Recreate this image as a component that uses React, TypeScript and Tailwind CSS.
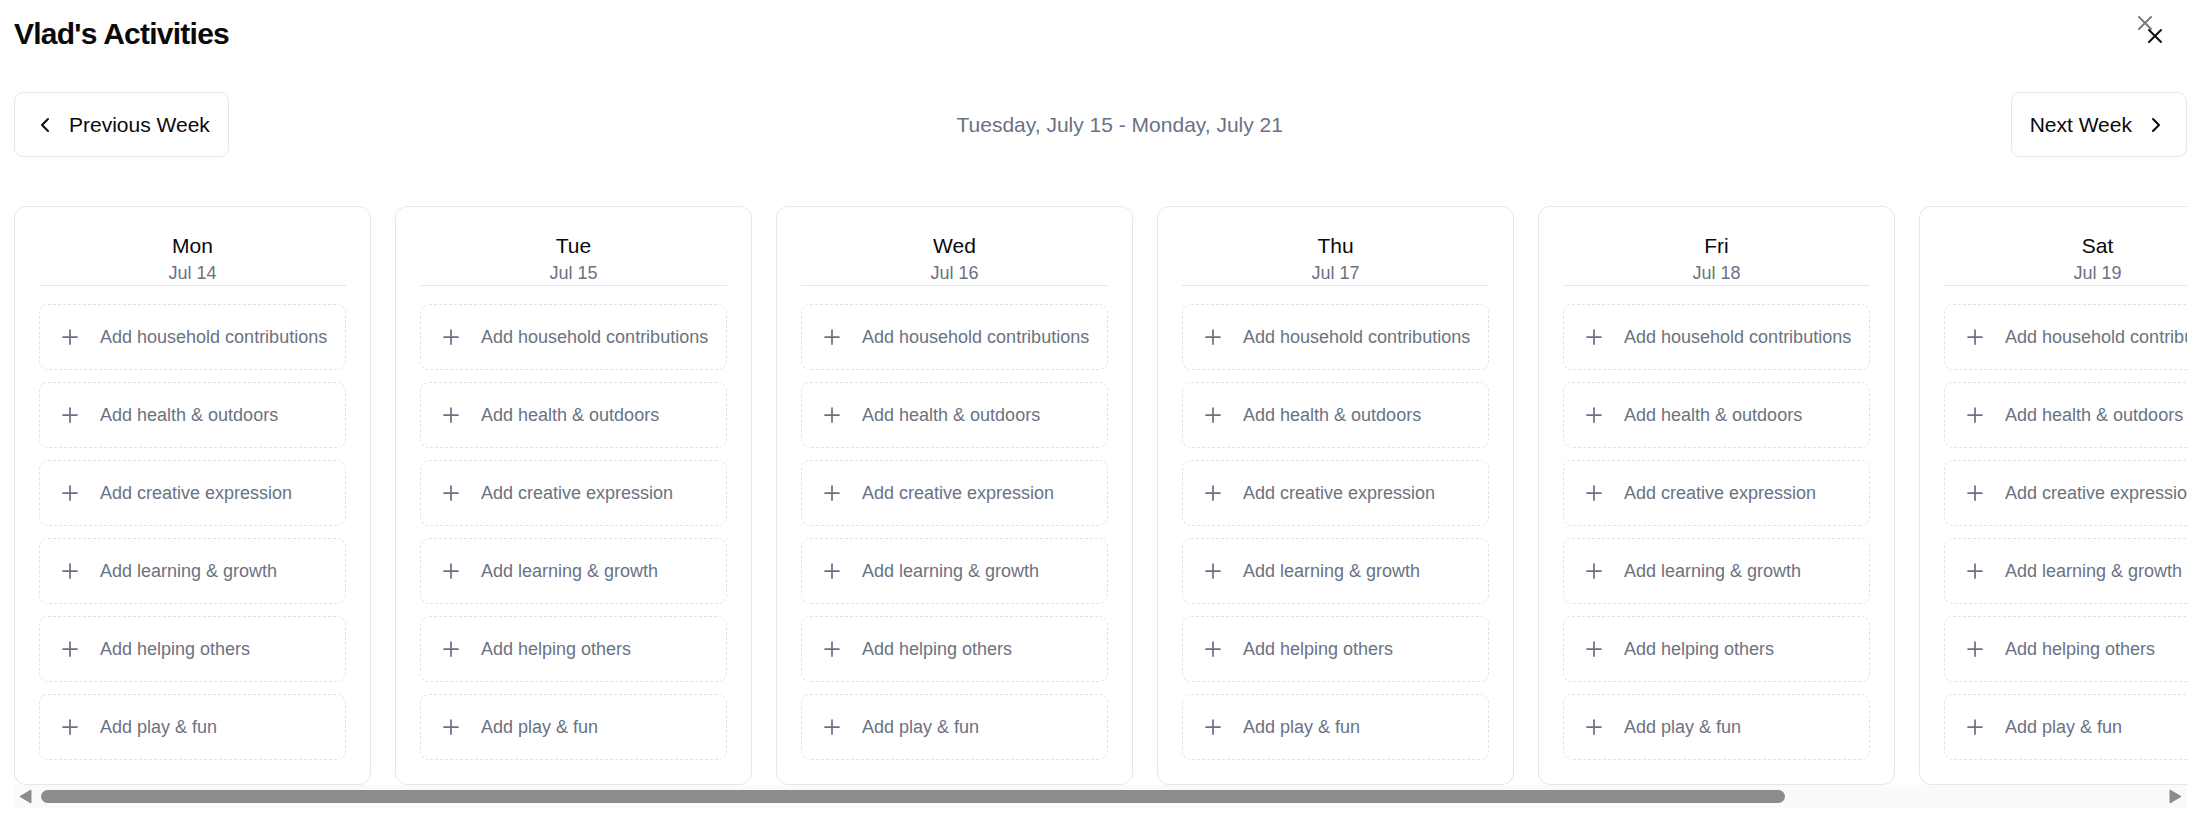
import React from "react";
import { ChevronLeft, ChevronRight, Plus, X } from "lucide-react";

const days = [
  { name: "Mon", date: "Jul 14" },
  { name: "Tue", date: "Jul 15" },
  { name: "Wed", date: "Jul 16" },
  { name: "Thu", date: "Jul 17" },
  { name: "Fri", date: "Jul 18" },
  { name: "Sat", date: "Jul 19" },
  { name: "Sun", date: "Jul 20" },
];

const categories = [
  "household contributions",
  "health & outdoors",
  "creative expression",
  "learning & growth",
  "helping others",
  "play & fun",
];

function DayCard({ name, date }: { name: string; date: string }) {
  return (
    <div className="flex w-[357px] shrink-0 flex-col rounded-[12px] border border-[#e5e7eb] bg-white p-6">
      <div className="border-b border-[#e5e7eb] text-center">
        <div className="text-[21px] leading-[30px] text-[#0a0a0a]">{name}</div>
        <div className="text-[18px] leading-[24px] text-gray-500">{date}</div>
      </div>
      <div className="mt-[18px] flex flex-col gap-3">
        {categories.map((c) => (
          <button
            key={c}
            className="flex h-[66px] items-center gap-[18px] rounded-[9px] border border-dashed border-[#e2e2e2] px-[18px] text-left text-[18px] whitespace-nowrap text-gray-500"
          >
            <Plus size={24} strokeWidth={1.75} className="shrink-0" />
            <span>Add {c}</span>
          </button>
        ))}
      </div>
    </div>
  );
}

// the browser hides its own scrollbar here, so draw the one from the design
function ScrollBar() {
  return (
    <div className="flex h-[23px] items-center bg-[#fafafa]">
      <svg width="23" height="23" viewBox="0 0 23 23" className="shrink-0">
        <path d="M17 5L17 18L6 11.5Z" fill="#8c8c8c" strokeLinejoin="round" stroke="#8c8c8c" strokeWidth="1" />
      </svg>
      <div className="flex-1">
        <div className="ml-[4px] h-[13px] w-[1744px] rounded-full bg-[#8c8c8c]" />
      </div>
      <svg width="23" height="23" viewBox="0 0 23 23" className="shrink-0">
        <path d="M6 5L6 18L17 11.5Z" fill="#8c8c8c" strokeLinejoin="round" stroke="#8c8c8c" strokeWidth="1" />
      </svg>
    </div>
  );
}

export default function App() {
  return (
    <div className="relative min-h-screen bg-white pl-[14px] pr-[18px] pt-4 font-['Liberation_Sans',Arial,sans-serif]">
      <h1 className="text-[30px] leading-[36px] font-bold tracking-tight text-[#0a0a0a]">
        Vlad's Activities
      </h1>

      <X size={24} strokeWidth={2} className="absolute right-[48px] top-[11px] text-[#7a7a7a]" />
      <X size={24} strokeWidth={2} className="absolute right-[38px] top-[24px] text-[#0a0a0a]" />

      <div className="mt-[40px] flex h-[65px] items-center justify-between">
        <button className="flex h-[65px] items-center gap-3 rounded-[9px] border border-[#e5e7eb] bg-white px-[18px] text-[21px] text-[#0a0a0a]">
          <ChevronLeft size={24} strokeWidth={2} />
          Previous Week
        </button>
        <div className="text-[21px] text-gray-500">Tuesday, July 15 - Monday, July 21</div>
        <button className="flex h-[65px] items-center gap-3 rounded-[9px] border border-[#e5e7eb] bg-white px-[18px] text-[21px] text-[#0a0a0a]">
          Next Week
          <ChevronRight size={24} strokeWidth={2} />
        </button>
      </div>

      <div className="mt-[49px]">
        <div className="overflow-hidden">
          <div className="flex w-max gap-6">
            {days.map((d) => (
              <DayCard key={d.name} name={d.name} date={d.date} />
            ))}
          </div>
        </div>
        <ScrollBar />
      </div>
    </div>
  );
}
